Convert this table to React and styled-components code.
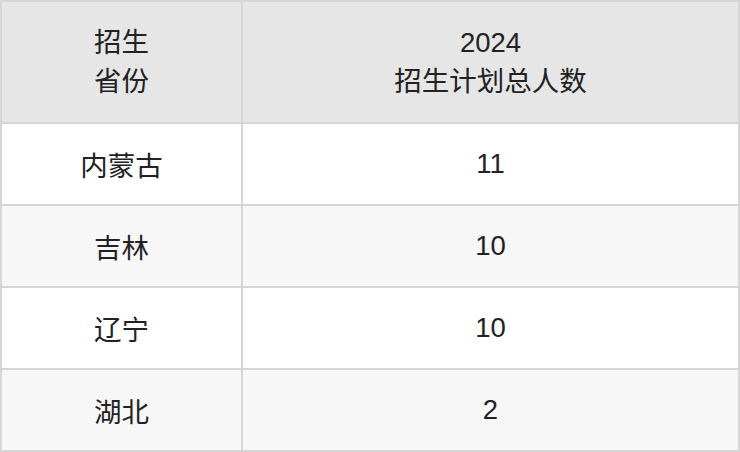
import styled, { createGlobalStyle } from 'styled-components';

const rows = [
  { province: '内蒙古', total: '11' },
  { province: '吉林', total: '10' },
  { province: '辽宁', total: '10' },
  { province: '湖北', total: '2' },
];

const App = () => {
  return (
    <>
      <GlobalStyle />
      <Table>
        <colgroup>
          <col style={{ width: 241 }} />
          <col />
        </colgroup>
        <thead>
          <tr>
            <HeadCell>招生<br />省份</HeadCell>
            <HeadCell>2024<br />招生计划总人数</HeadCell>
          </tr>
        </thead>
        <tbody>
          {rows.map((row, i) => (
            <Row key={row.province} $striped={i % 2 === 1}>
              <Cell>{row.province}</Cell>
              <Cell>{row.total}</Cell>
            </Row>
          ))}
        </tbody>
      </Table>
    </>
  );
};

const GlobalStyle = createGlobalStyle`
  body {
    margin: 0;
    background: #fff;
    font-family: "Liberation Sans", "Noto Sans CJK SC", sans-serif;
  }
`;

const Table = styled.table`
  width: 740px;
  height: 452px;
  border-collapse: collapse;
  table-layout: fixed;
  border: 2px solid #d6d6d6;
  color: #222;
  font-size: 27.5px;
`;

const HeadCell = styled.th`
  height: 120px;
  padding: 0;
  background: #e6e6e6;
  border: 2px solid #d6d6d6;
  font-weight: normal;
  line-height: 39px;
  text-align: center;
  vertical-align: middle;
`;

const Row = styled.tr`
  background: ${(p) => (p.$striped ? '#f7f7f7' : '#fff')};
`;

const Cell = styled.td`
  height: 80px;
  padding: 0;
  border: 2px solid #d6d6d6;
  text-align: center;
  vertical-align: middle;
`;

export default App;
